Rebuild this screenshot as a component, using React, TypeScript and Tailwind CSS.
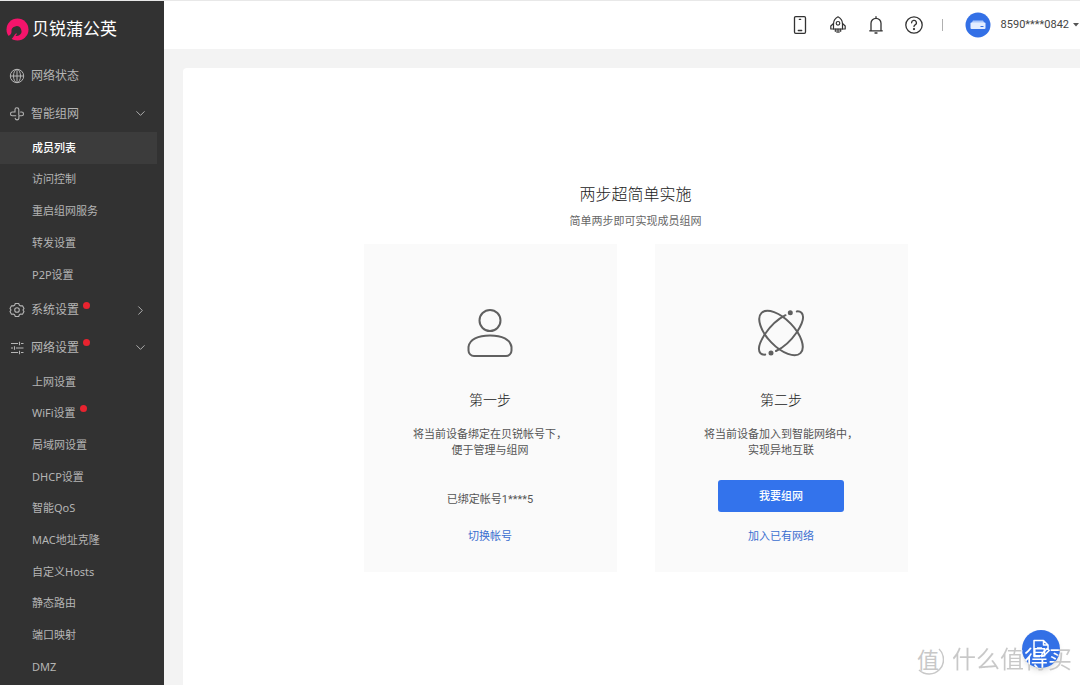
import React from "react";
import { ChevronDown, ChevronRight } from "lucide-react";

interface SubItem {
  label: string;
  active?: boolean;
  dot?: boolean;
}

const groupItems: SubItem[] = [
  { label: "成员列表", active: true },
  { label: "访问控制" },
  { label: "重启组网服务" },
  { label: "转发设置" },
  { label: "P2P设置" },
];

const networkItems: SubItem[] = [
  { label: "上网设置" },
  { label: "WiFi设置", dot: true },
  { label: "局域网设置" },
  { label: "DHCP设置" },
  { label: "智能QoS" },
  { label: "MAC地址克隆" },
  { label: "自定义Hosts" },
  { label: "静态路由" },
  { label: "端口映射" },
  { label: "DMZ" },
];

const GlobeIcon = () => (
  <svg width="16" height="16" viewBox="0 0 16 16" fill="none" stroke="currentColor" strokeWidth="1">
    <circle cx="8" cy="8" r="6.7" />
    <ellipse cx="8" cy="8" rx="3.5" ry="6.7" />
    <path d="M1.3 8h13.4M8 1.3v13.4" />
  </svg>
);

const MeshIcon = () => (
  <svg width="16" height="16" viewBox="0 0 16 16" fill="none" stroke="currentColor" strokeWidth="1.1" strokeLinecap="round">
    <path d="M9.800 8.800V3.600a1.900 1.900 0 0 0-3.800 0V6H3.400a1.900 1.900 0 0 0 0 3.800h3.400" />
    <path d="M6.200 12.400a1.900 1.900 0 0 0 3.700 0V9.800h2.700a1.900 1.900 0 0 0 0-3.800h-1" />
  </svg>
);

const GearIcon = () => (
  <svg width="16" height="16" viewBox="0 0 16 16" fill="none" stroke="currentColor" strokeWidth="1.1" strokeLinejoin="round">
    <path d="M6.300 1.500h3.400l.7 1.700 1.300.7 1.800-.2 1.500 2.700-1 1.600 1 1.600-1.500 2.700-1.800-.2-1.300.7-.7 1.700H6.300l-.7-1.700-1.300-.7-1.800.2L1 9.600 2 8 1 6.400l1.500-2.700 1.800.2 1.300-.7z" />
    <circle cx="8" cy="8" r="2.300" />
  </svg>
);

const SlidersIcon = () => (
  <svg width="16" height="16" viewBox="0 0 16 16" fill="none" stroke="currentColor" strokeWidth="1.100">
    <path d="M2 3.500h7M12 3.500h2.500M10.500 1.800v3.400M2 8h2M7 8h7.500M5.500 6.300v3.400M2 12.500h7M12 12.500h2.500M10.500 10.800v3.400" />
  </svg>
);

const PhoneIcon = () => (
  <svg width="20" height="20" viewBox="0 0 20 20" fill="none" stroke="currentColor" strokeWidth="1.300" strokeLinecap="round">
    <rect x="4.500" y="1.700" width="11" height="16.600" rx="1.200" />
    <path d="M9.300 4.300h1.400M8.300 15.500h3.400" />
  </svg>
);

const RocketIcon = () => (
  <svg width="20" height="20" viewBox="0 0 20 20" fill="none" stroke="currentColor" strokeWidth="1.200" strokeLinejoin="round" strokeLinecap="round">
    <path d="M10 1.800C7 3.400 5.500 5.800 5.500 8.800V14h9V8.800C14.500 5.800 13 3.400 10 1.800z" />
    <circle cx="10" cy="8.300" r="1.800" />
    <path d="M5.500 8.500L2.800 11v3h2.700M14.500 8.500l2.700 2.500v3h-2.700" />
    <path d="M7.300 14v2.300M9.100 14v3.500M10.900 14v3.500M12.700 14v2.300" />
  </svg>
);

const BellIcon = () => (
  <svg width="20" height="20" viewBox="0 0 20 20" fill="none" stroke="currentColor" strokeWidth="1.300" strokeLinejoin="round" strokeLinecap="round">
    <path d="M3.700 15.800h12.600M5 15.800V8.300a5 5 0 0 1 10 0v7.500M10 3.300V1.700" />
    <path d="M9 18h2" />
  </svg>
);

const HelpIcon = () => (
  <svg width="20" height="20" viewBox="0 0 20 20" fill="none" stroke="currentColor" strokeWidth="1.300" strokeLinecap="round">
    <circle cx="10" cy="10" r="8.200" />
    <path d="M7.600 7.800a2.400 2.400 0 1 1 3.500 2.100c-.8.4-1.100.9-1.100 1.700" />
    <circle cx="10" cy="14.100" r=".5" fill="currentColor" />
  </svg>
);

const UserIcon = () => (
  <svg width="48" height="50" viewBox="0 0 48 50" fill="none" stroke="currentColor" strokeWidth="2">
    <circle cx="24" cy="12.500" r="10.500" />
    <path d="M2.500 39C3.500 31.500 12 27.500 24 27.500S44.500 31.500 45.500 39v3.500A5.500 5.500 0 0 1 40 48H8a5.500 5.500 0 0 1-5.500-5.500z" />
  </svg>
);

const OrbitIcon = () => (
  <svg width="48" height="50" viewBox="0 0 48 50" fill="none" stroke="currentColor" strokeWidth="2" strokeLinecap="round">
    <ellipse cx="24" cy="25" rx="28" ry="13.500" transform="rotate(46 24 25)" />
    <path d="M28.500 7.200C22 10.500 13.500 18 8 26 2.500 34.500.500 42 3.500 45.200c1.200 1.200 2.700 1.600 4.700 1.400" />
    <path d="M19 43c7-3.200 15.500-11 21-19 5.500-8.500 7.500-16 4.500-19.200-1.200-1.200-2.700-1.600-4.700-1.400" />
    <circle cx="33.300" cy="4.800" r="1.500" fill="currentColor" />
    <circle cx="14" cy="45" r="1.500" fill="currentColor" />
  </svg>
);

const Dot = () => <span className="ml-1 mb-2.5 size-[7px] rounded-full bg-[#e8232f]" />;

interface MenuItemProps {
  icon: React.ReactNode;
  label: string;
  dot?: boolean;
  arrow?: "right" | "down";
  items?: SubItem[];
}

const MenuItem: React.FC<MenuItemProps> = ({ icon, label, dot, arrow, items }) => (
  <li>
    <a href="#" className={`flex items-center pl-[9px] pr-4 text-xs text-[#b5b5b5] ${items ? "h-[37px]" : "h-[38px]"}`}>
      {icon}
      <span className="ml-1.5">{label}</span>
      {dot && <Dot />}
      {arrow === "down" && <ChevronDown size={15} strokeWidth={1.5} className="ml-auto" />}
      {arrow === "right" && <ChevronRight size={15} strokeWidth={1.5} className="ml-auto" />}
    </a>
    {items && (
      <ul className={`grid auto-rows-fr ${items.length > 5 ? "h-[317px]" : "h-[159px]"}`}>
        {items.map((item) => (
          <li key={item.label} className="flex">
            <a
              href="#"
              className={`mr-[7px] flex flex-1 items-center pl-8 text-[11px] ${
                item.active ? "bg-[#3c3c3c] font-medium text-white" : "text-[#b5b5b5]"
              }`}
            >
              {item.label}
              {item.dot && <Dot />}
            </a>
          </li>
        ))}
      </ul>
    )}
  </li>
);

const Sidebar: React.FC = () => (
  <aside className="w-[164px] shrink-0 bg-[#323232]">
    <div className="flex h-14 items-center pl-1.5 text-white">
      <svg width="23" height="23" viewBox="0 0 23 23">
        <circle cx="11.500" cy="11.500" r="11" fill="#f5146b" />
        <path d="M0 18.500c3.500-.3 5.300-2.200 5.500-4.500a5 5 0 1 1 7.300 3.600c-1.700.8-3.400.3-3.400.3s1.600-1 1.400-2.600c-2 .3-2.600 2.700-4.300 4.700L3.500 23H0z" fill="#323232" />
      </svg>
      <span className="ml-[3px] text-[17px] leading-6">贝锐蒲公英</span>
    </div>
    <nav>
      <ul>
        <MenuItem icon={<GlobeIcon />} label="网络状态" />
        <MenuItem icon={<MeshIcon />} label="智能组网" arrow="down" items={groupItems} />
        <MenuItem icon={<GearIcon />} label="系统设置" dot arrow="right" />
        <MenuItem icon={<SlidersIcon />} label="网络设置" dot arrow="down" items={networkItems} />
      </ul>
    </nav>
  </aside>
);

const Header: React.FC = () => (
  <header className="flex h-12 items-center justify-end bg-white text-[#333]">
    <div className="flex gap-[18px]">
      <button aria-label="手机"><PhoneIcon /></button>
      <button aria-label="升级"><RocketIcon /></button>
      <button aria-label="通知"><BellIcon /></button>
      <button aria-label="帮助"><HelpIcon /></button>
    </div>
    <span className="ml-[18px] h-3 w-px bg-[#b0b0b0]" />
    <button className="ml-[22px] flex items-center text-[11px] text-[#444]">
      <svg width="26" height="26" viewBox="0 0 26 26">
        <circle cx="13" cy="13" r="12.500" fill="#3370e6" />
        <path d="M8 8.500h10l2 3.500H6z" fill="#a9c6fa" />
        <rect x="5.500" y="10.500" width="15" height="6.500" rx="1" fill="#e3edff" />
        <path d="M15.500 14.500h3" stroke="#3370e6" />
      </svg>
      <span className="ml-2.5 font-['Roboto',sans-serif]">8590****0842</span>
      <svg width="6" height="4" viewBox="0 0 6 4" className="ml-1 mr-px">
        <path d="M0 0h6L3 3.500z" fill="#555" />
      </svg>
    </button>
  </header>
);

interface StepCardProps {
  icon: React.ReactNode;
  title: string;
  lines: string[];
  link: string;
  children: React.ReactNode;
}

const StepCard: React.FC<StepCardProps> = ({ icon, title, lines, link, children }) => (
  <section className="flex w-[253px] flex-col items-center bg-[#fafafa] pt-16 pb-7 text-[11px] text-[#555]">
    <div className="text-[#606060]">{icon}</div>
    <h2 className="mt-8 text-sm leading-5 font-light text-[#222]">{title}</h2>
    <p className="mt-4 text-center leading-4">
      {lines[0]}
      <br />
      {lines[1]}
    </p>
    <div className="mt-[22px] flex h-8 items-center">{children}</div>
    <a href="#" className="mt-4 leading-4 text-[#3b6fd0]">{link}</a>
  </section>
);

const App: React.FC = () => {
  return (
    <div
      lang="zh-CN"
      className="relative flex min-h-screen overflow-hidden border-t border-[#e8e8e8] bg-[#f3f3f3] font-['Noto_Sans','Noto_Sans_CJK_SC',sans-serif]"
    >
      <Sidebar />
      <div className="flex min-w-0 flex-1 flex-col">
        <Header />
        <main className="mt-[19px] ml-[19px] flex-1 rounded-tl bg-white pt-28 pl-2">
          <h1 className="text-center text-base leading-7 font-light text-[#222]">两步超简单实施</h1>
          <p className="mt-[5px] text-center text-[11px] leading-4 text-[#666]">简单两步即可实现成员组网</p>
          <div className="mt-[15px] flex justify-center gap-[38px]">
            <StepCard
              icon={<UserIcon />}
              title="第一步"
              lines={["将当前设备绑定在贝锐帐号下，", "便于管理与组网"]}
              link="切换帐号"
            >
              <span className="mt-2">
                已绑定帐号<span className="font-['Roboto',sans-serif]">1****5</span>
              </span>
            </StepCard>
            <StepCard
              icon={<OrbitIcon />}
              title="第二步"
              lines={["将当前设备加入到智能网络中，", "实现异地互联"]}
              link="加入已有网络"
            >
              <button className="h-8 w-[126px] rounded-[3px] bg-[#3373ec] font-medium text-white">我要组网</button>
            </StepCard>
          </div>
        </main>
      </div>

      <button aria-label="反馈" className="absolute right-5 bottom-[17px] flex size-[38px] items-center justify-center rounded-full bg-[#3370e6] shadow-md">
        <svg width="18" height="20" viewBox="0 0 18 20" fill="none" stroke="#fff" strokeWidth="1.500" strokeLinejoin="round">
          <path d="M16 10V6l-4.500-4.500H2v16h6M11.500 1.500V6H16M5 9h5" />
          <path d="M9.500 17.500l.7-3 5-5 2 2-5 5z" />
        </svg>
      </button>
      {/* site mark, turns white where it crosses the round button */}
      <div className="pointer-events-none absolute right-2 bottom-2 flex items-center">
        <span className="relative flex size-8 items-center justify-center text-[22px] leading-8 text-[#c8c8c8]">
          值
          <svg viewBox="0 0 32 32" fill="none" stroke="#c8c8c8" strokeWidth="1.500" className="absolute inset-0">
            <path d="M27 6a14.500 14.500 0 0 1-20 21" />
          </svg>
        </span>
        <span className="ml-2 bg-[radial-gradient(circle_19px_at_88px_8px,#fff_96%,#c8c8c8_100%)] bg-clip-text text-[24px] leading-9 text-transparent">
          什么值得买
        </span>
      </div>
    </div>
  );
};

export default App;
